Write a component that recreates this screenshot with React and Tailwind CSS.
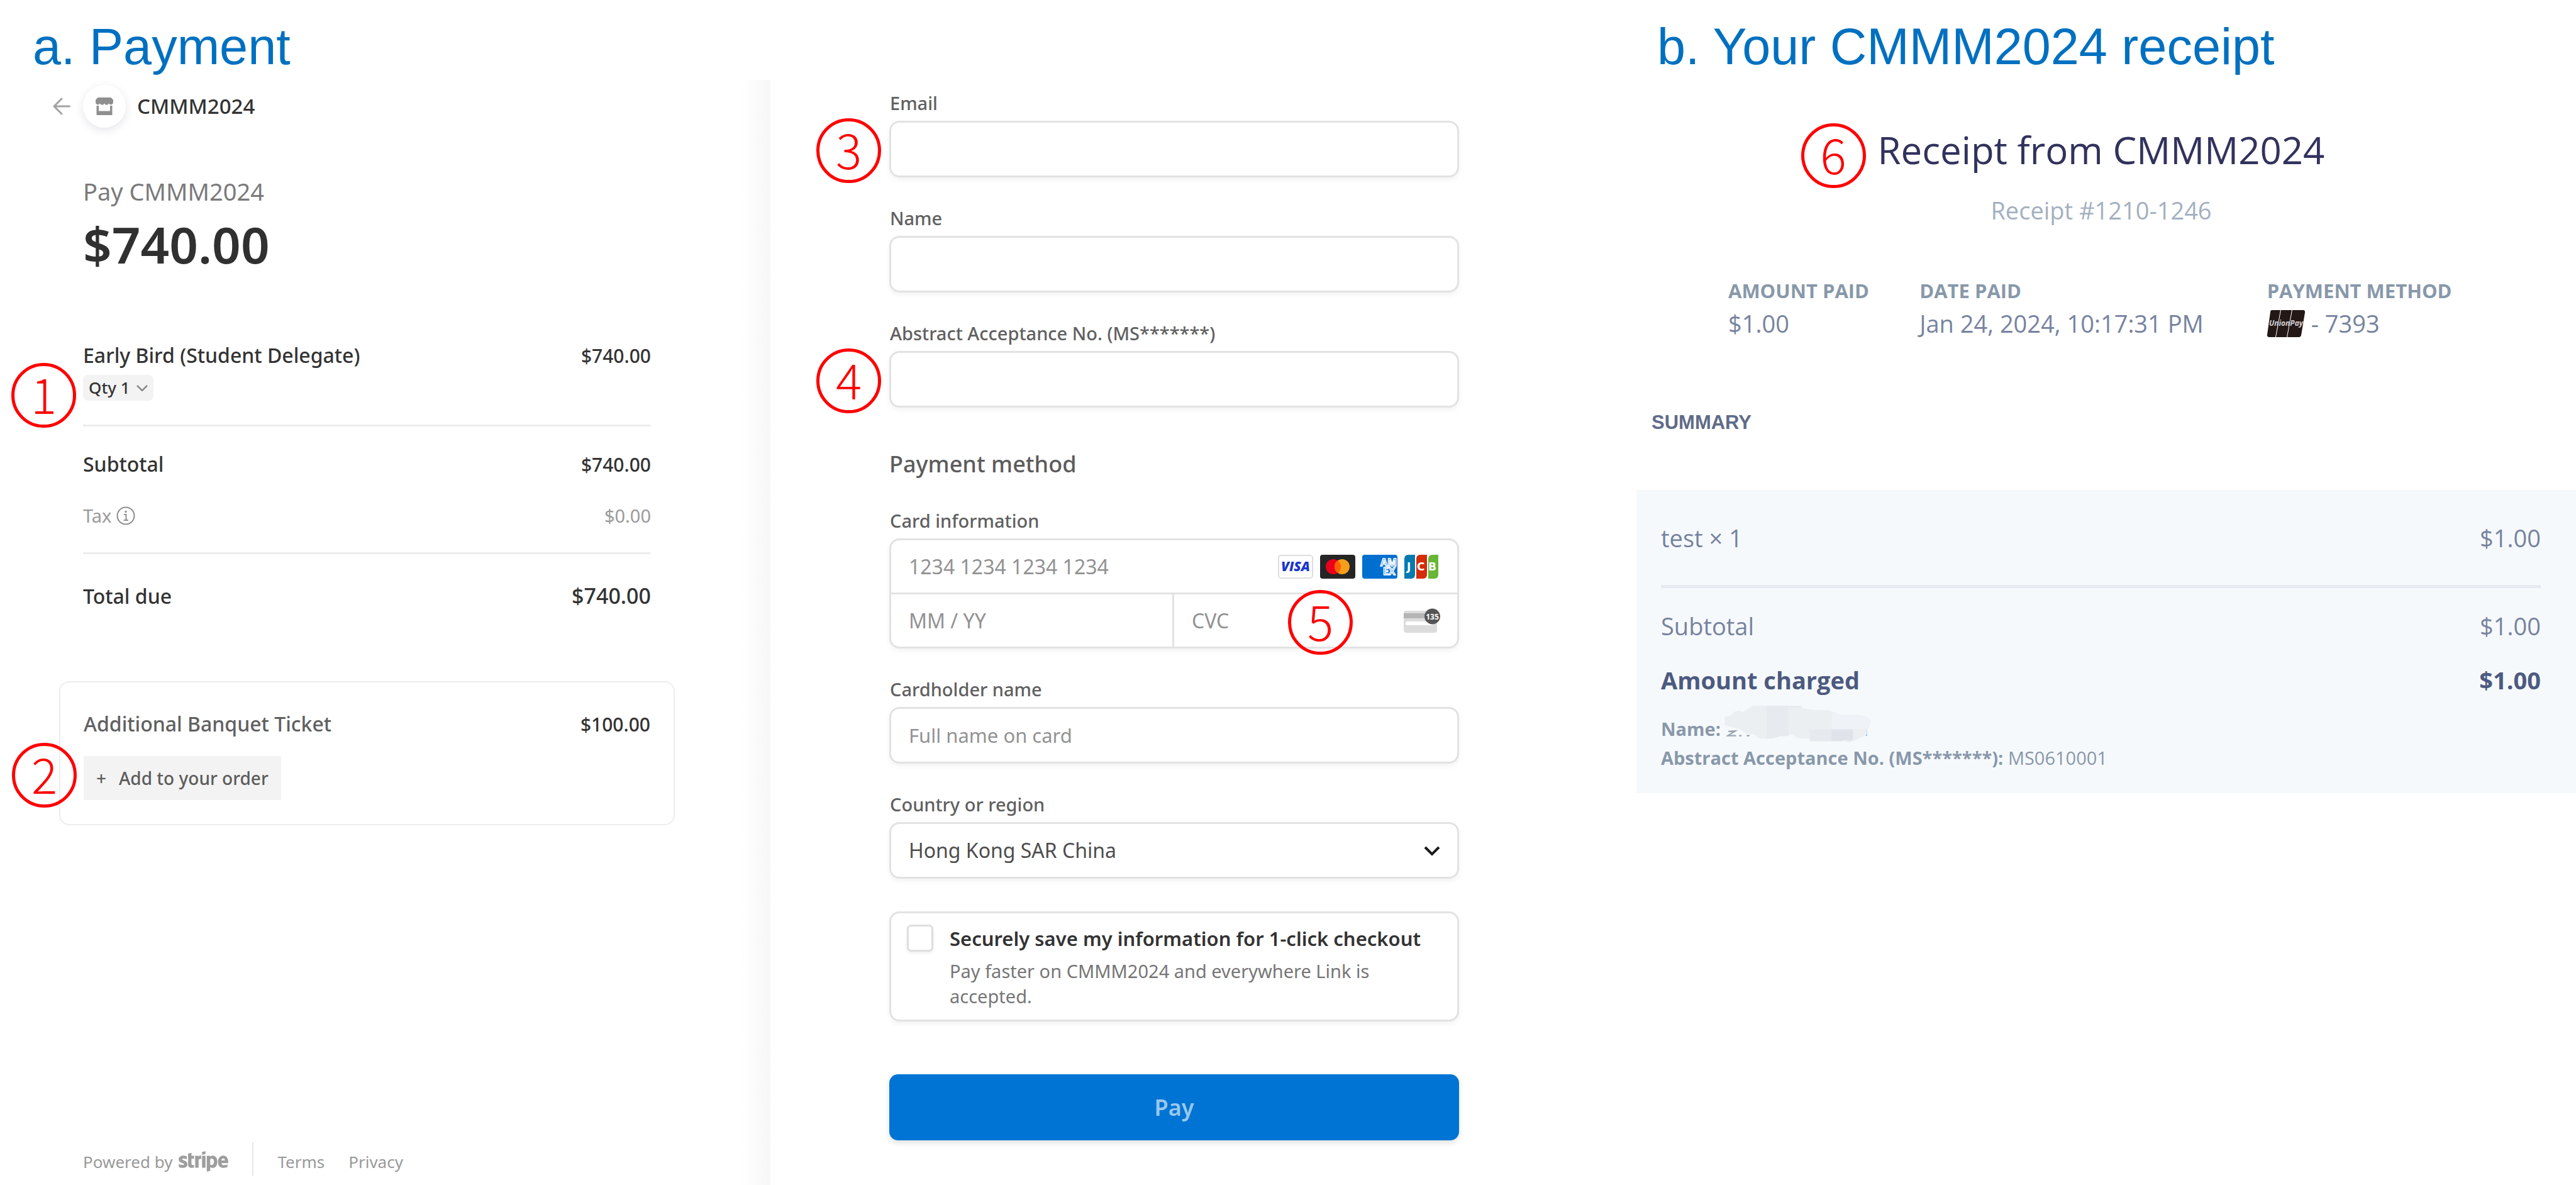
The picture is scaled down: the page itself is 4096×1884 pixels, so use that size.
import React from "react";
import { FaStripe } from "react-icons/fa";

const fieldBox =
  "w-full rounded-[16px] border-[3px] border-[#e2e2e2] bg-white shadow-[0_4px_8px_rgba(0,0,0,0.05)]";

function Step({ n, className }) {
  return (
    <span
      className={
        "absolute z-10 flex size-[103px] items-center justify-center rounded-full border-[5px] border-[#ff0000] pb-2 font-['Noto_Sans_CJK_SC',sans-serif] text-[77px] leading-[80px] font-light text-[#ff0000] " +
        className
      }
    >
      {n}
    </span>
  );
}

function ArrowIcon() {
  return (
    <svg className="h-7 w-7 shrink-0" viewBox="0 0 28 28" fill="none" stroke="#a3a3a3" strokeWidth="3" strokeLinecap="round" strokeLinejoin="round">
      <path d="M26.500 14H2M14 2L2 14l12 12" />
    </svg>
  );
}

function StoreIcon() {
  return (
    <svg className="h-7 w-7" viewBox="0 0 28 28" fill="#8f8f8f">
      <path d="M3.500 0h21L28 4v3.500a3.700 3.700 0 0 1-7 1.800 3.700 3.700 0 0 1-7 0 3.700 3.700 0 0 1-7 0A3.700 3.700 0 0 1 0 7.500V4z" />
      <path d="M1.500 13h3.500v8.500h18V13h3.500v15h-25z" />
    </svg>
  );
}

function InfoIcon() {
  return (
    <svg className="h-[30px] w-[30px]" viewBox="0 0 30 30" fill="none" stroke="#8f8f8f" strokeWidth="2">
      <circle cx="15" cy="15" r="13.500" />
      <path d="M12 13h3.500v9M11.500 22h7.500" />
      <path d="M15 7v3" strokeWidth="3" />
    </svg>
  );
}

function Visa() {
  return (
    <svg className="h-[38px] w-14" viewBox="0 0 56 38">
      <rect x="1" y="1" width="54" height="36" rx="4" fill="#fff" stroke="#dedede" strokeWidth="2" />
      <text x="28" y="26" textAnchor="middle" fontFamily="Open Sans, sans-serif" fontWeight="800" fontStyle="italic" fontSize="21" fill="#1a35cc">
        VISA
      </text>
    </svg>
  );
}

function Mastercard() {
  return (
    <svg className="h-[38px] w-14" viewBox="0 0 56 38">
      <rect width="56" height="38" rx="4" fill="#252525" />
      <circle cx="21" cy="19" r="12" fill="#eb001b" />
      <circle cx="35" cy="19" r="12" fill="#f79e1b" />
      <path d="M28 9.250a12 12 0 0 1 0 19.500 12 12 0 0 1 0-19.500z" fill="#ff5f00" />
    </svg>
  );
}

function Amex() {
  return (
    <svg className="h-[38px] w-14" viewBox="0 0 56 38">
      <rect width="56" height="38" rx="4" fill="#016fd0" />
      <text fontFamily="Open Sans, sans-serif" fontWeight="700" fontSize="16" fill="#016fd0" stroke="#fff" strokeWidth="1.500">
        <tspan x="29" y="18">AM</tspan>
        <tspan x="33" y="32">EX</tspan>
      </text>
    </svg>
  );
}

function Jcb() {
  return (
    <svg className="h-[38px] w-[54px]" viewBox="0 0 54 38">
      <path d="M6 0h11v32a6 6 0 0 1-6 6H0V6a6 6 0 0 1 6-6z" fill="#047ab1" />
      <path d="M25 0h11v32a6 6 0 0 1-6 6H19V6a6 6 0 0 1 6-6z" fill="#d42d06" />
      <path d="M44 0h10v32a6 6 0 0 1-6 6H38V6a6 6 0 0 1 6-6z" fill="#67b637" />
      <text fontFamily="DejaVu Sans, sans-serif" fontWeight="700" fontSize="17" fill="#fff">
        <tspan x="4" y="25">J</tspan>
        <tspan x="20" y="25">C</tspan>
        <tspan x="38" y="25">B</tspan>
      </text>
    </svg>
  );
}

function CvcIcon() {
  return (
    <svg className="h-10 w-[58px]" viewBox="0 0 58 40">
      <rect y="4" width="53" height="35" rx="4" fill="#dcdcdc" />
      <rect y="8" width="53" height="8" fill="#b5b5b5" />
      <rect x="3" y="21" width="44" height="6" rx="2" fill="#fff" />
      <circle cx="45.500" cy="13" r="12.500" fill="#555" />
      <text x="45.500" y="18" textAnchor="middle" fontFamily="Open Sans, sans-serif" fontWeight="700" fontSize="12" fill="#fff">
        135
      </text>
    </svg>
  );
}

function UnionPay() {
  return (
    <svg className="h-[43px] w-[60px]" viewBox="0 0 60 43">
      <path d="M8 0h13l-8 43H3a3 3 0 0 1-3-4L5 3a3 3 0 0 1 3-3z" fill="#231815" />
      <path d="M22 0h17l-8 43H14z" fill="#231815" />
      <path d="M40 0h17a3 3 0 0 1 3 4l-6 36a4 4 0 0 1-4 3H32z" fill="#231815" />
      <text x="30" y="25" textAnchor="middle" fontFamily="Open Sans, sans-serif" fontWeight="700" fontStyle="italic" fontSize="12" fill="#d5d0ce">
        UnionPay
      </text>
    </svg>
  );
}

function Redaction() {
  return (
    <svg className="absolute -top-4 left-[100px] h-[60px] w-[235px]" viewBox="370 60 725 185" aria-hidden="true">
      <path d="M392 192l34-2-36 23h40M445 213h12M482 213h14" stroke="#9aa5b3" strokeWidth="7" fill="none" />
      <path d="M1070 186v28" stroke="#86bbe6" strokeWidth="7" />
      <path d="M375 120l28-5 20-20 25-4 12 10 30-22 25-13h232l15 14 40 6 80 2 28 10 25 12 98 2 40 8 17 22-6 28-12 15v22l-20 12-48 22-22 4-22-6-20 2H792v-12l-60-4-25-16-45-4-30 8-22 14-62 2-30-22-40-4-30-22-75-20z" fill="#eceff2" />
      <path d="M580 66h168v10H688v140h-40l-30 8-38 4z" fill="#e7eaef" />
      <path d="M900 105l30 3 98 2 40 8 20 22-6 28-14 12H900z" fill="#eff2f7" />
      <path d="M792 182h108v58H792z" fill="#e6e9ed" />
      <path d="M898 182h106v48l-16 10-20-6-20 6h-50z" fill="#e0e3e9" />
    </svg>
  );
}

const labelText = "block pl-px text-[29px] leading-10 font-medium text-[#606060]";

function Field({ id, label, placeholder, step, className }) {
  return (
    <div className={className}>
      <label htmlFor={id} className={labelText}>
        {label}
      </label>
      <div className="relative mt-2">
        {step && <Step n={step} className="-left-[116px] -top-[4px]" />}
        <input
          id={id}
          type="text"
          placeholder={placeholder}
          className={fieldBox + " block h-[90px] px-7 text-[31px] text-[#444] outline-none placeholder:text-[#929292]"}
        />
      </div>
    </div>
  );
}

function Row({ label, value, className = "" }) {
  return (
    <div className={"flex items-baseline justify-between " + className}>
      <dt>{label}</dt>
      <dd>{value}</dd>
    </div>
  );
}

function OrderSummary() {
  return (
    <div className="flex flex-col bg-[linear-gradient(to_right,transparent_calc(100%-48px),#f7f7f7)] pr-[190px] pl-[132px] text-[#333]">
      <div className="-ml-12 flex items-center pt-2">
        <a href="#back" aria-label="Back">
          <ArrowIcon />
        </a>
        <span className="ml-5 flex size-[68px] items-center justify-center rounded-full bg-white shadow-[0_4px_14px_rgba(60,66,87,0.14)]">
          <StoreIcon />
        </span>
        <span className="ml-[18px] text-[33px] leading-10 font-medium">CMMM2024</span>
      </div>

      <h2 className="mt-[77px] text-[38px] leading-[48px] text-[#7a7a7a]">Pay CMMM2024</h2>
      <p className="mt-3 text-[80px] leading-[96px] font-semibold text-[#303030]">$740.00</p>

      <div className="relative mt-[109px]">
        <div className="flex items-baseline justify-between leading-10 font-medium">
          <span className="text-[32px]">Early Bird (Student Delegate)</span>
          <span className="text-[30px]">$740.00</span>
        </div>
        <Step n="1" className="top-[32px] -left-[114px]" />
        <button type="button" className="mt-[10px] flex h-[41px] items-center gap-[10px] rounded-[8px] bg-[#f3f3f3] px-[9px] text-[26px] font-medium">
          Qty 1
          <svg className="h-[10px] w-[18px]" viewBox="0 0 18 10" fill="none" stroke="#8a8a8a" strokeWidth="2.500">
            <path d="M1 1l8 8 8-8" />
          </svg>
        </button>
      </div>

      <dl className="mt-[38px] border-t-[3px] border-[#ececec] pt-[40px] leading-10 font-medium">
        <Row label={<span className="text-[32px]">Subtotal</span>} value="$740.00" className="text-[30px]" />
        <Row
          label={
            <span className="flex items-center gap-2">
              Tax <InfoIcon />
            </span>
          }
          value="$0.00"
          className="mt-[41px] text-[29px] font-normal text-[#9a9a9a]"
        />
        <div className="mt-[38px] border-t-[3px] border-[#ececec] pt-[46px]">
          <Row label={<span className="text-[32px]">Total due</span>} value="$740.00" className="text-[34px]" />
        </div>
      </dl>

      <div className="relative -mx-[38px] mt-[115px] rounded-[16px] border-2 border-[#ededed] px-[37px] pt-[46px] pb-[38px]">
        <div className="flex items-baseline justify-between leading-10 font-medium">
          <span className="text-[32px] text-[#606060]">Additional Banquet Ticket</span>
          <span className="text-[30px]">$100.00</span>
        </div>
        <Step n="2" className="top-[96px] -left-[77px]" />
        <button type="button" className="mt-[30px] flex h-[70px] items-center gap-5 bg-[#f3f3f3] px-5 text-[28px] font-medium text-[#5c5c5c]">
          <span>+</span>
          Add to your order
        </button>
      </div>

      <footer className="mt-auto flex items-center pb-[15px] text-[26px] leading-9 text-[#999]">
        <span className="flex items-center pt-2">
          Powered by
          <FaStripe className="-my-4 ml-[10px] h-[63px] w-[79px] text-[#9e9e9e]" aria-label="stripe" />
        </span>
        <span className="ml-[38px] h-[53px] border-l-2 border-[#e6e6e6]" />
        <a href="#terms" className="ml-[38px] pt-2">Terms</a>
        <a href="#privacy" className="ml-[38px] pt-2">Privacy</a>
      </footer>
    </div>
  );
}

function CheckoutForm() {
  const cell = "w-full min-w-0 bg-transparent pl-7 text-[32px] text-[#444] outline-none placeholder:text-[#929292]";
  return (
    <form className="pt-[17px] pr-[282px] pl-[189px]" onSubmit={(e) => e.preventDefault()}>
      <Field id="email" label="Email" step="3" />
      <Field id="name" label="Name" className="mt-[45px]" />
      <Field id="abstract" label="Abstract Acceptance No. (MS*******)" step="4" className="mt-[45px]" />

      <h2 className="mt-[66px] text-[36px] leading-[48px] font-medium text-[#5c5c5c]">Payment method</h2>

      <label htmlFor="card" className={labelText + " mt-[46px]"}>
        Card information
      </label>
      <div className={fieldBox + " relative mt-2"}>
        <div className="flex h-[83px] items-center pr-[30px]">
          <input id="card" type="text" placeholder="1234 1234 1234 1234" className={cell} />
          <div className="flex shrink-0 gap-[11px]">
            <Visa />
            <Mastercard />
            <Amex />
            <Jcb />
          </div>
        </div>
        <div className="grid h-[86px] grid-cols-2 border-t-[3px] border-[#e2e2e2]">
          <input aria-label="Expiration" type="text" placeholder="MM / YY" className={cell + " border-r-[3px] border-[#e2e2e2]"} />
          <div className="flex items-center pr-[27px]">
            <input aria-label="CVC" type="text" placeholder="CVC" className={cell} />
            <span className="shrink-0">
              <CvcIcon />
            </span>
          </div>
        </div>
        <Step n="5" className="right-[166px] -bottom-[13px]" />
      </div>

      <Field id="holder" label="Cardholder name" placeholder="Full name on card" className="mt-[45px]" />

      <label htmlFor="country" className={labelText + " mt-[45px]"}>
        Country or region
      </label>
      <div className="relative mt-2">
        <select id="country" className={fieldBox + " block h-[90px] appearance-none px-7 text-[32px] text-[#4d4d4d] outline-none"}>
          <option>Hong Kong SAR China</option>
        </select>
        <svg className="pointer-events-none absolute top-[38px] right-[30px] h-4 w-[26px]" viewBox="0 0 26 16" fill="none" stroke="#1a1a1a" strokeWidth="4">
          <path d="M2 2l11 11L24 2" />
        </svg>
      </div>

      <div className={fieldBox + " mt-[52px] flex items-start gap-[26px] pt-[18px] pr-[20px] pb-[17px] pl-[25px]"}>
        <input
          id="save"
          type="checkbox"
          className="h-[43px] w-[42px] shrink-0 appearance-none rounded-[7px] border-[3px] border-[#dedede] bg-white shadow-[0_3px_5px_rgba(0,0,0,0.06)]"
        />
        <label htmlFor="save" className="pt-[2px]">
          <span className="block text-[31px] leading-10 font-semibold text-[#333]">Securely save my information for 1-click checkout</span>
          <span className="mt-3 block text-[29px] leading-10 text-[#767676]">
            Pay faster on CMMM2024 and everywhere Link is accepted.
          </span>
        </label>
      </div>

      <button
        type="submit"
        className="mt-[84px] h-[105px] w-full rounded-[14px] bg-[#0074d4] text-[36px] font-semibold text-[#99c7ee] shadow-[0_4px_10px_rgba(0,0,0,0.12)]"
      >
        Pay
      </button>
    </form>
  );
}

function Receipt() {
  const term = "text-[31px] leading-10 font-bold text-[#8898aa]";
  return (
    <div className="pt-[71px] text-[38px] leading-[48px] text-[#76839f]">
      <div className="pr-4 text-center">
        <h2 className="relative inline-block text-[60px] leading-[80px] text-[#32325d]">
          <Step n="6" className="-top-[2px] -left-[122px]" />
          Receipt from CMMM2024
        </h2>
        <p className="mt-[32px] text-[#a3b0c0]">Receipt #1210-1246</p>
      </div>

      <dl className="mt-[84px] grid grid-cols-[304fr_552fr_491fr] pl-[146px]">
        <div>
          <dt className={term}>AMOUNT PAID</dt>
          <dd className="mt-2">$1.00</dd>
        </div>
        <div>
          <dt className={term}>DATE PAID</dt>
          <dd className="mt-2">Jan 24, 2024, 10:17:31 PM</dd>
        </div>
        <div>
          <dt className={term}>PAYMENT METHOD</dt>
          <dd className="mt-2 flex items-center gap-[10px]">
            <UnionPay />- 7393
          </dd>
        </div>
      </dl>

      <h3 className="mt-[114px] pl-6 font-['Liberation_Sans',sans-serif] text-[31px] leading-10 font-bold text-[#5f6b88]">SUMMARY</h3>

      <div className="mt-[87px] bg-[#f6f9fc] pt-[52px] pr-[56px] pb-[33px] pl-[39px]">
        <dl>
          <Row label="test × 1" value="$1.00" />
          <div className="mt-[51px] border-t-[5px] border-[#e6ebf1] pt-9">
            <Row label="Subtotal" value="$1.00" />
          </div>
          <Row label="Amount charged" value="$1.00" className="mt-[38px] font-bold text-[#4d5a80]" />
        </dl>
        <div className="mt-[31px] text-[29px] leading-[46px] text-[#8898aa]">
          <p className="relative">
            <b>Name:</b>
            <Redaction />
          </p>
          <p>
            <b>Abstract Acceptance No. (MS*******):</b> MS0610001
          </p>
        </div>
      </div>
    </div>
  );
}

export default function App() {
  const heading = "h-[127px] pt-[26px] font-['Liberation_Sans',sans-serif] text-[81px] leading-[96px] text-[#0070c0]";
  return (
    <main className="grid min-h-screen grid-cols-[2602fr_1494fr] bg-white">
      <section className="flex min-w-0 flex-col font-['Noto_Sans','Open_Sans',sans-serif]">
        <h1 className={heading + " pl-[52px]"}>a. Payment</h1>
        <div className="grid flex-1 grid-cols-[1225fr_1377fr]">
          <OrderSummary />
          <CheckoutForm />
        </div>
      </section>
      <section className="min-w-0 font-['Open_Sans','Noto_Sans',sans-serif]">
        <h1 className={heading + " pl-[33px]"}>b. Your CMMM2024 receipt</h1>
        <Receipt />
      </section>
    </main>
  );
}
